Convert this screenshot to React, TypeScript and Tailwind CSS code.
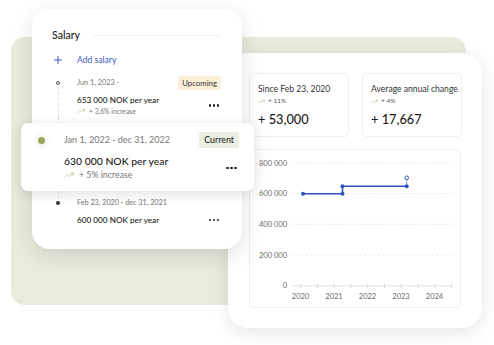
import { TrendingUp, Plus } from 'lucide-react'

const font = { fontFamily: 'Lato, "Noto Sans", sans-serif' }

function Trend({ size = 10 }: { size?: number }) {
  return <TrendingUp size={size} strokeWidth={1.6} className="text-[#a3b36b] shrink-0" />
}

function Dots({ big = false }: { big?: boolean }) {
  const d = big ? 'w-[2.6px] h-[2.6px]' : 'w-[2.2px] h-[2.2px]'
  return (
    <div className="flex gap-[1.6px]">
      <span className={`${d} rounded-full bg-[#222]`} />
      <span className={`${d} rounded-full bg-[#222]`} />
      <span className={`${d} rounded-full bg-[#222]`} />
    </div>
  )
}

function Chart() {
  const ys = [
    { y: 13, label: '800 000' },
    { y: 43.7, label: '600 000' },
    { y: 74.3, label: '400 000' },
    { y: 105, label: '200 000' },
  ]
  const years = [2020, 2021, 2022, 2023, 2024]
  const ticks = Array.from({ length: 10 }, (_, i) => 50.7 + i * 16.75)
  return (
    <svg width="212" height="159" viewBox="0 0 212 159" className="block">
      {ys.map(r => (
        <g key={r.label}>
          <text x="37" y={r.y + 2.6} textAnchor="end" fontSize="7.5" fill="#6b6b6b" style={font}>{r.label}</text>
          <line x1="42" x2="202" y1={r.y} y2={r.y} stroke="#e3e3e3" strokeWidth="0.8" strokeDasharray="2.5 2" />
        </g>
      ))}
      <text x="37" y={137.6} textAnchor="end" fontSize="7.5" fill="#6b6b6b" style={font}>0</text>
      <line x1="42" x2="202" y1="136" y2="136" stroke="#d8d8d8" strokeWidth="0.8" />
      {ticks.map(t => (
        <line key={t} x1={t} x2={t} y1="134" y2="138" stroke="#d0d0d0" strokeWidth="0.8" />
      ))}
      {years.map((yr, i) => (
        <text key={yr} x={50.5 + i * 33.5} y="148.5" textAnchor="middle" fontSize="7.5" fill="#6b6b6b" style={font}>{yr}</text>
      ))}
      <polyline points="53,43.7 92.5,43.7 92.5,36.3 156.7,36.3" fill="none" stroke="#2f53b8" strokeWidth="1.6" />
      <line x1="156.7" x2="156.7" y1="36.3" y2="30" stroke="#2f53b8" strokeWidth="1" strokeDasharray="1.5 1.2" />
      <circle cx="53" cy="43.7" r="2" fill="#2f53b8" />
      <circle cx="92.5" cy="43.7" r="2" fill="#2f53b8" />
      <circle cx="92.5" cy="36.3" r="2" fill="#2f53b8" />
      <circle cx="156.7" cy="36.3" r="2" fill="#2f53b8" />
      <circle cx="156.7" cy="27.8" r="1.8" fill="white" stroke="#2f53b8" strokeWidth="1" />
    </svg>
  )
}

function StatCard({ title, pct, value }: { title: string; pct: string; value: string }) {
  return (
    <div className="w-[100px] h-[64px] rounded-[5px] border border-[#eeeeee] bg-white pl-[8px] pt-[9px]">
      <div className="text-[8.6px] leading-[12px] text-[#333] whitespace-nowrap">{title}</div>
      <div className="flex items-center gap-[3px] mt-[1px] text-[6.5px] leading-[10px] text-[#555]">
        <Trend size={7} />
        <span>{pct}</span>
      </div>
      <div className="text-[12.8px] leading-[16px] font-medium text-[#1c1c1c] mt-[5px]">{value}</div>
    </div>
  )
}

export default function App() {
  return (
    <div className="relative w-[494px] h-[345px] bg-white overflow-hidden text-[#1f1f1f]" style={font}>
      {/* backdrop */}
      <div className="absolute left-[11px] top-[37px] w-[455px] h-[268px] rounded-[14px] bg-[#e9ebdd]" />

      {/* right panel */}
      <div className="absolute left-[228px] top-[53px] w-[254px] h-[275px] rounded-[20px] bg-white shadow-[0_4px_18px_rgba(0,0,0,0.10)] pl-[21px] pt-[20px]">
        <div className="flex gap-[13px]">
          <StatCard title="Since Feb 23, 2020" pct="+ 11%" value="+ 53,000" />
          <StatCard title="Average annual change" pct="+ 4%" value="+ 17,667" />
        </div>
        <div className="mt-[12px] w-[212px] h-[159px] rounded-[5px] border border-[#eeeeee] bg-white">
          <Chart />
        </div>
      </div>

      {/* left panel */}
      <div className="absolute left-[32px] top-[9px] w-[210px] h-[240px] rounded-[18px] bg-white shadow-[0_6px_22px_rgba(0,0,0,0.12)] pl-[20px] pr-[21px] pt-[18px]">
        <div className="flex items-center h-[16px]">
          <span className="text-[10.5px] leading-[16px] font-medium text-[#1c1c1c]">Salary</span>
          <div className="flex-1 h-px bg-[#f0f0f0] ml-[13px]" />
        </div>
        <div className="flex items-center mt-[9px] h-[16px]">
          <Plus size={12} strokeWidth={2} className="text-[#3a5cc5]" />
          <span className="ml-[13px] text-[8.6px] text-[#3a5cc5]">Add salary</span>
        </div>

        {/* entry 1 */}
        <div className="flex mt-[8px]">
          <div className="w-[12px] flex flex-col items-center">
            <span className="mt-[5px] w-[4px] h-[4px] rounded-full border border-[#555]" />
            <div className="flex-1 border-l border-dashed border-[#dedede] mt-[2px]" />
          </div>
          <div className="ml-[13px] flex-1">
            <div className="flex items-center justify-between h-[14px]">
              <span className="text-[7.3px] leading-[10px] text-[#777]">Jun 1, 2023 -</span>
              <span className="rounded-[3px] bg-[#fcefd8] px-[4px] text-[7.8px] leading-[14px] text-[#333]">Upcoming</span>
            </div>
            <div className="flex items-center justify-between mt-[4.5px]">
              <div>
                <div className="text-[8.2px] leading-[11px] font-medium text-[#1c1c1c]">653 000 NOK per year</div>
                <div className="flex items-center gap-[4px] text-[6.8px] leading-[11px] text-[#777]">
                  <Trend size={8} />
                  <span>+ 3,6% increase</span>
                </div>
              </div>
              <div className="mr-[2px]"><Dots /></div>
            </div>
          </div>
        </div>

        {/* entry hidden beneath the highlighted one */}
        <div className="flex h-[81.5px]">
          <div className="w-[12px] flex justify-center">
            <div className="border-l border-dashed border-[#dedede]" />
          </div>
        </div>

        {/* entry 3 */}
        <div className="flex">
          <div className="w-[12px] flex flex-col items-center">
            <span className="mt-[3px] w-[4px] h-[4px] rounded-full bg-[#333]" />
          </div>
          <div className="ml-[13px] flex-1">
            <div className="text-[7.2px] leading-[10px] text-[#777]">Feb 23, 2020 - dec 31, 2021</div>
            <div className="flex items-center justify-between mt-[6.5px]">
              <span className="text-[8.2px] leading-[11px] font-medium text-[#1c1c1c]">600 000 NOK per year</span>
              <div className="mr-[2px]"><Dots /></div>
            </div>
          </div>
        </div>
      </div>

      {/* highlighted current entry */}
      <div className="absolute left-[21px] top-[123px] w-[233px] h-[68px] rounded-[7px] bg-white shadow-[0_3px_14px_rgba(0,0,0,0.12)] pl-[16px] pr-[15px] pt-[9px] flex">
        <div className="w-[8px] flex justify-center">
          <span className="mt-[5px] w-[7px] h-[7px] rounded-full bg-[#98a65f] shadow-[0_0_4px_3px_rgba(0,0,0,0.05)]" />
        </div>
        <div className="ml-[19px] flex-1">
          <div className="flex items-center justify-between h-[16px]">
            <span className="text-[9px] leading-[16px] text-[#777]">Jan 1, 2022 - dec 31, 2022</span>
            <span className="rounded-[3px] bg-[#eceee1] px-[5px] text-[8.8px] leading-[16px] font-medium text-[#2a2a2a]">Current</span>
          </div>
          <div className="flex items-center justify-between mt-[6.5px]">
            <div>
              <div className="text-[10.4px] leading-[13px] font-medium text-[#1c1c1c]">630 000 NOK per year</div>
              <div className="flex items-center gap-[5px] text-[8.8px] leading-[14px] text-[#777]">
                <Trend size={10} />
                <span>+ 5% increase</span>
              </div>
            </div>
            <div className="mr-[2px]"><Dots big /></div>
          </div>
        </div>
      </div>
    </div>
  )
}
